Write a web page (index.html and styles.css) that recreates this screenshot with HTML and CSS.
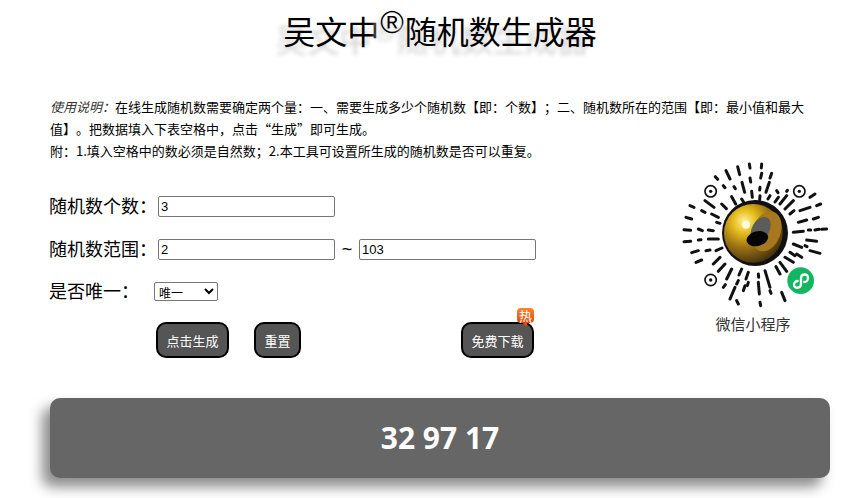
FILE: index.html
```html
<!DOCTYPE html>
<html lang="zh-CN">
<head>
  <meta charset="UTF-8" />
  <title>随机数生成器</title>
  <link rel="stylesheet" href="styles.css">
</head>
<body>
  <div class="page">
    <h1>吴文中<sup>®</sup>随机数生成器</h1>

    <div class="intro">
      <p><em>使用说明：</em>在线生成随机数需要确定两个量：一、需要生成多少个随机数【即：个数】；二、随机数所在的范围【即：最小值和最大值】。把数据填入下表空格中，点击“生成”即可生成。</p>
      <p>附：1.填入空格中的数必须是自然数；2.本工具可设置所生成的随机数是否可以重复。</p>
    </div>

    <div class="main">
      <form class="form">
        <div class="row">
          <label class="label">随机数个数：</label>
          <input class="num" type="text" value="3">
        </div>
        <div class="row">
          <label class="label">随机数范围：</label>
          <input class="num" type="text" value="2">
          <span class="tilde">~</span>
          <input class="num" type="text" value="103">
        </div>
        <div class="row row-select">
          <label class="label label-short">是否唯一：</label>
          <select class="unique">
            <option>唯一</option>
            <option>可重复</option>
          </select>
        </div>
        <div class="buttons">
          <button class="btn btn-wide" type="button">点击生成</button>
          <button class="btn btn-reset" type="button">重置</button>
          <button class="btn btn-wide btn-download" type="button">免费下载
            <span class="hot">热</span>
          </button>
        </div>
      </form>

      <div class="qr">
        <svg class="sun" viewBox="0 0 510 465" width="170" height="155">
          <defs>
            <radialGradient id="gold" cx="35%" cy="30%" r="80%">
              <stop offset="0" stop-color="#fff3a0"/>
              <stop offset="0.25" stop-color="#e5bd1c"/>
              <stop offset="0.55" stop-color="#9c7314"/>
              <stop offset="1" stop-color="#33240c"/>
            </radialGradient>
          </defs>
          <g stroke="#111" stroke-width="9" stroke-linecap="round" fill="none">
            <path d="M238 30l2 12M275 30l-1 12M203 38l6 24M168 50l12 25M136 68l7 8M275 58l-3 14M240 72l2 12M305 58l-5 14M216 85l8 30M298 85l-10 30M245 112l2 18M270 100l-1 8M192 98l4 6M320 110l4 6M350 112l2-3M185 128l12 22M160 95l5 6M215 135l6 10M270 125l-1 12M300 125l-6 10M325 130l-10 14"/>
            <path d="M48 190l17 5M42 227l20 2M42 263l20-1M65 296l20-6M78 325l17-7M60 155l12 5M85 225l12 5M115 228l15 2M125 180l20 10M95 170l10 5M105 140l27 20M115 255l30 0M108 290l12-2M85 258l8-1M140 205l10 3M138 290l18-8M155 150l14 14"/>
            <path d="M420 130l15-10M440 155l12-5M390 170l30-10M345 165l25-25M330 150l20-25M360 180l12-10M385 205l25-7M430 195l15-5M370 235l30-3M415 228l7 0M435 228l12-2M455 226l15-1M410 258l30 4M370 270l25 10M420 290l30 8M360 295l15 10M380 300l15 10M345 310l25 15M330 325l20 27M318 338l12 22M405 275l6 3"/>
            <path d="M285 350l15 50M265 360l1 10M235 355l-7 20M265 385l3 35M235 385l-3 10M225 395l-5 15M205 380l-5 10M195 400l-15 35M200 440l5 10M270 445l2 10M165 330l-20 22M150 310l-20 20M185 345l-15 30M335 415l10 25M215 345l-8 18M300 410l3 8M160 400l6-8"/>
          </g>
          <g fill="none" stroke="#111" stroke-width="5">
            <circle cx="122" cy="112" r="17"/>
            <circle cx="388" cy="112" r="17"/>
            <circle cx="122" cy="378" r="17"/>
          </g>
          <circle cx="122" cy="112" r="5" fill="#111"/>
          <circle cx="388" cy="112" r="5" fill="#111"/>
          <circle cx="122" cy="378" r="5" fill="#111"/>

          <circle cx="255" cy="237" r="99" fill="#111"/>
          <circle cx="250" cy="238" r="88" fill="url(#gold)"/>
          <ellipse cx="290" cy="232" rx="42" ry="62" fill="#a8781f" transform="rotate(20 290 232)"/>
          <ellipse cx="272" cy="226" rx="26" ry="40" fill="#5c5c58" transform="rotate(30 272 226)"/>
          <ellipse cx="262" cy="254" rx="33" ry="22" fill="#070503" transform="rotate(-15 262 254)"/>
          <circle cx="228" cy="212" r="12" fill="#fffbe0"/>

          <circle cx="392" cy="380" r="43" fill="#fff"/>
          <circle cx="392" cy="380" r="40" fill="#12b660"/>
          <path d="M372 392c0 14 22 12 21-4v-16c0-14 22-14 21 0c0 8-6 12-11 12M372 392c0-6 5-11 11-11" fill="none" stroke="#fff" stroke-width="7" stroke-linecap="round"/>
        </svg>
        <div class="qr-title">微信小程序</div>
      </div>
    </div>

    <div class="result">32 97 17</div>
  </div>
</body>
</html>
```

FILE: styles.css
```css
html, body {
  margin: 0;
  background: #fff;
  color: #000;
}

body {
  font-family: "Noto Sans CJK SC", "Liberation Sans", sans-serif;
  text-spacing-trim: space-all;
}

.page {
  height: 498px;
  padding: 0 20px 0 50px;
  overflow: hidden;
}

h1 {
  margin: 0;
  padding-top: 8px;
  height: 96px;
  box-sizing: border-box;
  font-size: 32px;
  font-weight: normal;
  line-height: 44px;
  text-align: center;
  text-shadow: -8px 8px 4px #d2d2d2;
}

h1 sup {
  margin: 0 1px;
  font-family: "Liberation Sans", sans-serif;
  font-size: 32px;
  line-height: 0;
  vertical-align: 11px;
}

.intro {
  font-size: 13px;
  line-height: 22px;
  height: 66px;
}

.intro p {
  margin: 0;
}

.intro em {
  color: #333;
}

.main {
  display: flex;
  justify-content: space-between;
}

.form {
  padding-top: 34px;
}

.row {
  display: flex;
  align-items: center;
  height: 21px;
  margin-bottom: 22px;
}

.row-select {
  height: 19px;
  margin-bottom: 21px;
}

.label {
  width: 109px;
  margin-left: -1px;
  padding-bottom: 3px;
  font-size: 18px;
  white-space: nowrap;
}

.label-short {
  width: 105px;
}

.num {
  width: 177px;
  height: 21px;
  box-sizing: border-box;
  padding: 1px 2px;
  border: 1px solid #767676;
  border-radius: 2px;
  font-family: "Liberation Sans", sans-serif;
  font-size: 13px;
}

.tilde {
  width: 24px;
  text-align: center;
  font-family: "Liberation Sans", sans-serif;
  font-size: 18px;
}

.unique {
  width: 64px;
  height: 19px;
  font-size: 12px;
  font-family: "Noto Sans CJK SC", sans-serif;
  background: #fff;
  border: 1px solid #767676;
  border-radius: 2px;
  padding: 0;
}

.buttons {
  display: flex;
  margin-left: 106px;
}

.btn {
  position: relative;
  height: 36px;
  padding: 0;
  background: #555;
  color: #fff;
  border: 2px solid #000;
  border-radius: 10px;
  font-family: "Noto Sans CJK SC", sans-serif;
  font-size: 13px;
}

.btn-wide {
  width: 73px;
}

.btn-reset {
  width: 47px;
  margin: 0 160px 0 25px;
}

.hot {
  position: absolute;
  top: -16px;
  right: -2px;
  width: 17px;
  height: 15px;
  background: linear-gradient(#f9862a, #e24a0c);
  border-radius: 4px;
  font-size: 13px;
  line-height: 15px;
  text-align: center;
  color: #fff;
}

.hot::after {
  content: "";
  position: absolute;
  left: 5px;
  top: 14px;
  border-top: 5px solid #e24a0c;
  border-left: 4px solid transparent;
  border-right: 2px solid transparent;
}

.qr {
  width: 170px;
  margin-top: -8px;
  margin-right: -10px;
  text-align: center;
}

.sun {
  display: block;
}

.qr-title {
  font-size: 15px;
  color: #333;
  line-height: 20px;
  margin-top: 5px;
  margin-left: -4px;
}

.result {
  margin-top: 40px;
  height: 80px;
  background: #666;
  border-radius: 10px;
  box-shadow: -8px 9px 13px rgba(0, 0, 0, 0.45);
  color: #fff;
  font-family: "Open Sans", sans-serif;
  font-size: 30px;
  font-weight: bold;
  line-height: 80px;
  text-align: center;
}
```
